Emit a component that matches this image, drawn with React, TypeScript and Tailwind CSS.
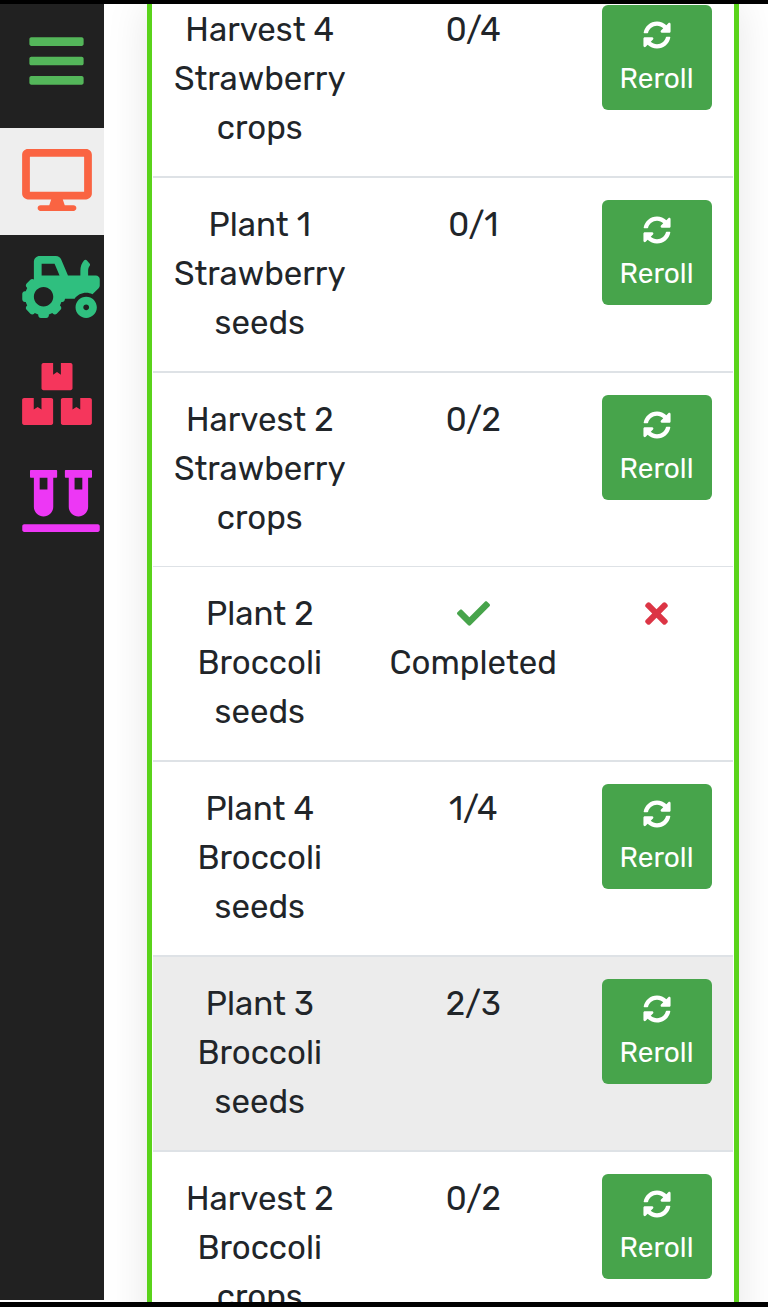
import type { IconType } from "react-icons";
import {
  FaBars,
  FaBoxes,
  FaCheck,
  FaDesktop,
  FaSyncAlt,
  FaTimes,
  FaTractor,
  FaVials,
} from "react-icons/fa";

type Quest = {
  id: number;
  action: string;
  crop: string;
  unit: string;
  done: number;
  goal: number;
  highlighted?: boolean;
};

const quests: Quest[] = [
  { id: 1, action: "Harvest 4", crop: "Strawberry", unit: "crops", done: 0, goal: 4 },
  { id: 2, action: "Plant 1", crop: "Strawberry", unit: "seeds", done: 0, goal: 1 },
  { id: 3, action: "Harvest 2", crop: "Strawberry", unit: "crops", done: 0, goal: 2 },
  { id: 4, action: "Plant 2", crop: "Broccoli", unit: "seeds", done: 2, goal: 2 },
  { id: 5, action: "Plant 4", crop: "Broccoli", unit: "seeds", done: 1, goal: 4 },
  { id: 6, action: "Plant 3", crop: "Broccoli", unit: "seeds", done: 2, goal: 3, highlighted: true },
  { id: 7, action: "Harvest 2", crop: "Broccoli", unit: "crops", done: 0, goal: 2 },
];

const links: { label: string; icon: IconType; style: string; active?: boolean }[] = [
  { label: "Dashboard", icon: FaDesktop, style: "w-[70px] text-[#fa6442]", active: true },
  { label: "Farm", icon: FaTractor, style: "w-[78px] text-[#2fbf7f]" },
  { label: "Storage", icon: FaBoxes, style: "w-[70px] text-[#f5365c]" },
  { label: "Research", icon: FaVials, style: "w-[78px] text-[#ed37f5]" },
];

function Sidebar() {
  return (
    <nav className="mb-[2px] w-[104px] shrink-0 bg-[#212121]">
      <button
        type="button"
        aria-label="Toggle menu"
        className="flex h-[124px] w-full items-center pb-[10px] pl-[29px]"
      >
        <FaBars className="h-[62px] w-[55px] text-[#54b65a]" />
      </button>
      <ul>
        {links.map(({ label, icon: Icon, style, active }) => (
          <li key={label}>
            <a
              href="#"
              aria-label={label}
              className={`flex h-[107px] items-center pb-[3px] pl-[22px] ${active ? "bg-[#eeeeee]" : ""}`}
            >
              <Icon className={`h-[62px] shrink-0 ${style}`} />
            </a>
          </li>
        ))}
      </ul>
    </nav>
  );
}

function RerollButton() {
  return (
    <button
      type="button"
      className="inline-flex h-[105px] w-[110px] flex-col items-center rounded-md bg-[#47a44b] py-2 text-[28px] leading-[44px] text-white"
    >
      <span className="flex h-[44px] items-center">
        <FaSyncAlt />
      </span>
      Reroll
    </button>
  );
}

function QuestRow({ quest }: { quest: Quest }) {
  const completed = quest.done >= quest.goal;

  return (
    <tr
      className={`border-[#dee2e6] align-top first:border-t-0 [&>td]:pt-[22px] [&>td]:pb-6 first:[&>td]:pt-px ${
        completed ? "border-t" : "border-t-2"
      } ${quest.highlighted ? "bg-[#ececec]" : ""}`}
    >
      <td>
        {quest.action}
        <br />
        {quest.crop}
        <br />
        {quest.unit}
      </td>
      <td>
        {completed ? (
          <>
            <span className="flex h-[49px] items-center justify-center">
              <FaCheck className="text-[#47a44b]" />
            </span>
            Completed
          </>
        ) : (
          `${quest.done}/${quest.goal}`
        )}
      </td>
      <td>
        {completed ? (
          <span className="flex h-[49px] items-center justify-center">
            <FaTimes className="text-[#dc3545]" />
          </span>
        ) : (
          <RerollButton />
        )}
      </td>
    </tr>
  );
}

export default function App() {
  return (
    <div className="flex h-screen flex-col overflow-hidden border-t-4 border-b-5 border-black bg-white font-['Rubik','Inter',sans-serif] text-[#212529]">
      <div className="flex min-h-0 flex-1">
        <Sidebar />
        <main className="min-w-0 flex-1 overflow-hidden pr-[29px] pl-[43px]">
          <div className="border-x-[5px] border-[#5ad31a] bg-white px-px shadow-[0_0_40px_rgba(0,0,0,0.1)]">
            <table className="w-full table-fixed border-collapse text-center text-[33px] leading-[49px]">
              <colgroup>
                <col />
                <col />
                <col className="w-[153px]" />
              </colgroup>
              <tbody>
                {quests.map((quest) => (
                  <QuestRow key={quest.id} quest={quest} />
                ))}
              </tbody>
            </table>
          </div>
        </main>
      </div>
    </div>
  );
}
